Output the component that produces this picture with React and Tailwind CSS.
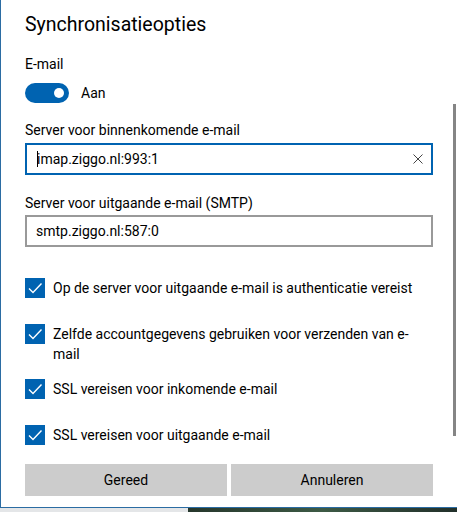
import React from "react";

const font = { fontFamily: 'Roboto, "Noto Sans", sans-serif' };

function CheckBox() {
  return (
    <div className="w-[20px] h-[20px] shrink-0 bg-[#0063b1] flex items-center justify-center">
      <svg width="20" height="20" viewBox="0 0 20 20" fill="none">
        <path d="M4 10.5 L8 14.5 L16.5 5.5" stroke="#ffffff" strokeWidth="1.4" />
      </svg>
    </div>
  );
}

function CheckRow({ label, className = "" }) {
  return (
    <div className={`flex items-start gap-[8px] ${className}`}>
      <CheckBox />
      <span className="text-[14px] leading-[20px] text-black">{label}</span>
    </div>
  );
}

export default function App() {
  return (
    <div className="w-[457px] h-[512px] overflow-hidden bg-white" style={font}>
      <div className="relative h-[508px] bg-white border-l border-b border-[#2b6ca3] pl-[24px] pr-[24px] flex flex-col">
        <h1 className="mt-[11px] text-[19.5px] leading-[28px] text-black font-normal">Synchronisatieopties</h1>

        <div className="mt-[15px] text-[14px] leading-[20px] text-black">E-mail</div>
        <div className="mt-[9px] flex items-center gap-[12px]">
          <div className="w-[44px] h-[20px] rounded-full bg-[#0063b1] flex items-center justify-end pr-[5px]">
            <div className="w-[10px] h-[10px] rounded-full bg-white" />
          </div>
          <span className="text-[14px] leading-[20px] text-black">Aan</span>
        </div>

        <div className="mt-[17px] text-[14px] leading-[20px] text-black">Server voor binnenkomende e-mail</div>
        <div className="mt-[3px] h-[32px] border-2 border-[#0063b1] flex items-center pl-[10px] pr-[7px]">
          <span className="w-px h-[16px] bg-black -mr-[1px]" />
          <span className="flex-1 text-[14px] leading-[20px] text-black">imap.ziggo.nl:993:1</span>
          <svg width="12" height="12" viewBox="0 0 12 12">
            <path d="M1.5 1.5 L10.5 10.5 M10.5 1.5 L1.5 10.5" stroke="#444" strokeWidth="1" />
          </svg>
        </div>

        <div className="mt-[18px] text-[14px] leading-[20px] text-black">Server voor uitgaande e-mail (SMTP)</div>
        <div className="mt-[2px] h-[32px] border-2 border-[#999999] flex items-center pl-[9px]">
          <span className="text-[14px] leading-[20px] text-black">smtp.ziggo.nl:587:0</span>
        </div>

        <CheckRow className="mt-[31px]" label="Op de server voor uitgaande e-mail is authenticatie vereist" />
        <CheckRow className="mt-[26px]" label={<>Zelfde accountgegevens gebruiken voor verzenden van e-<br />mail</>} />
        <CheckRow className="mt-[15px]" label="SSL vereisen voor inkomende e-mail" />
        <CheckRow className="mt-[26px]" label="SSL vereisen voor uitgaande e-mail" />

        <div className="mt-[19px] grid grid-cols-2 gap-[4px]">
          <button className="h-[32px] bg-[#cccccc] text-[14px] text-black">Gereed</button>
          <button className="h-[32px] bg-[#cccccc] text-[14px] text-black">Annuleren</button>
        </div>

        <div className="absolute right-[1px] top-[104px] w-[3px] h-[332px] bg-[#858585]" />
      </div>
      <div className="flex h-[4px]">
        <div className="w-[188px] bg-[#e4e6e8]" />
        <div className="flex-1 bg-gradient-to-r from-[#26372c] via-[#3d5a45] to-[#22302a]" />
      </div>
    </div>
  );
}
